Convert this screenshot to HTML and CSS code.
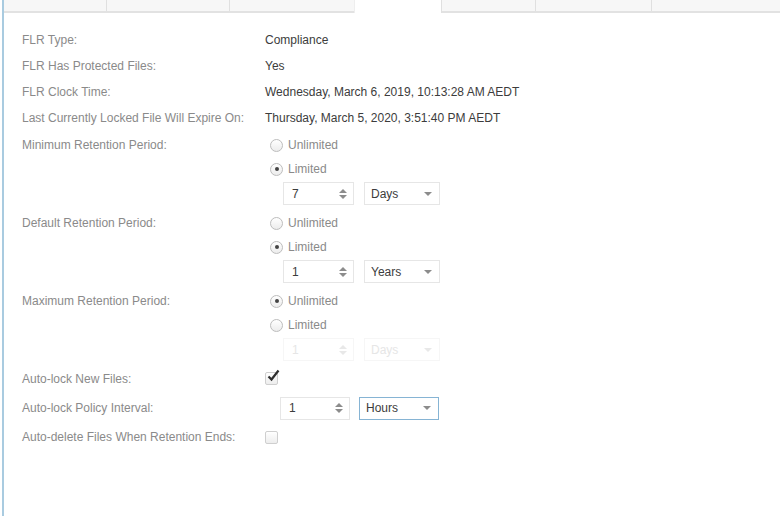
FILE: index.html
```html
<!DOCTYPE html>
<html lang="en">
<head>
  <meta charset="UTF-8" />
  <title>File Level Retention</title>
  <link rel="stylesheet" href="styles.css">
</head>
<body>
  <div class="panel">
    <div class="tabs">
      <div class="tab"></div>
      <div class="tab"></div>
      <div class="tab"></div>
      <div class="tab active"></div>
      <div class="tab"></div>
      <div class="tab"></div>
      <div class="tab last"></div>
    </div>

    <div class="content">
      <div class="row info">
        <div class="label">FLR Type:</div>
        <div class="value">Compliance</div>
      </div>
      <div class="row info">
        <div class="label">FLR Has Protected Files:</div>
        <div class="value">Yes</div>
      </div>
      <div class="row info">
        <div class="label">FLR Clock Time:</div>
        <div class="value">Wednesday, March 6, 2019, 10:13:28 AM AEDT</div>
      </div>
      <div class="row info">
        <div class="label">Last Currently Locked File Will Expire On:</div>
        <div class="value">Thursday, March 5, 2020, 3:51:40 PM AEDT</div>
      </div>

      <div class="row group first">
        <div class="label">Minimum Retention Period:</div>
        <div class="controls">
          <div class="radio-line"><span class="radio"></span>Unlimited</div>
          <div class="radio-line"><span class="radio on"></span>Limited</div>
          <div class="period">
            <div class="spinner"><span>7</span><span class="arrows"><i class="up"></i><i class="down"></i></span></div>
            <div class="select"><span>Days</span><i class="caret"></i></div>
          </div>
        </div>
      </div>

      <div class="row group">
        <div class="label">Default Retention Period:</div>
        <div class="controls">
          <div class="radio-line"><span class="radio"></span>Unlimited</div>
          <div class="radio-line"><span class="radio on"></span>Limited</div>
          <div class="period">
            <div class="spinner"><span>1</span><span class="arrows"><i class="up"></i><i class="down"></i></span></div>
            <div class="select"><span>Years</span><i class="caret"></i></div>
          </div>
        </div>
      </div>

      <div class="row group">
        <div class="label">Maximum Retention Period:</div>
        <div class="controls">
          <div class="radio-line"><span class="radio on"></span>Unlimited</div>
          <div class="radio-line"><span class="radio"></span>Limited</div>
          <div class="period disabled">
            <div class="spinner"><span>1</span><span class="arrows"><i class="up"></i><i class="down"></i></span></div>
            <div class="select"><span>Days</span><i class="caret"></i></div>
          </div>
        </div>
      </div>

      <div class="row check-row">
        <div class="label">Auto-lock New Files:</div>
        <div class="check on">
          <svg width="15" height="14" viewBox="0 0 15 14"><path d="M2.5 7.5 L5.5 10.5 L12.5 1.5" fill="none" stroke="#2f2f2f" stroke-width="2.2"/></svg>
        </div>
      </div>
      <div class="row interval">
        <div class="label">Auto-lock Policy Interval:</div>
        <div class="period">
          <div class="spinner"><span>1</span><span class="arrows"><i class="up"></i><i class="down"></i></span></div>
          <div class="select focus"><span>Hours</span><i class="caret"></i></div>
        </div>
      </div>
      <div class="row check-row">
        <div class="label">Auto-delete Files When Retention Ends:</div>
        <div class="check"></div>
      </div>
    </div>
  </div>
</body>
</html>
```

FILE: styles.css
```css
html, body {
  margin: 0;
  height: 100%;
}
body {
  font-family: 'Liberation Sans', Arial, sans-serif;
  font-size: 12px;
  background: #fff;
}
.panel {
  height: 100%;
  border-left: 2px solid #fff;
  box-shadow: inset 2px 0 0 #a9cbe0;
  padding-left: 2px;
}
.tabs {
  display: flex;
  height: 11px;
  border-bottom: 2px solid #e2e2e2;
  background: #f7f7f7;
}
.tab {
  border-right: 1px solid #e0e0e0;
}
.tab:nth-child(1) { width: 102px; }
.tab:nth-child(2) { width: 122px; }
.tab:nth-child(3) { width: 124px; }
.tab.active {
  width: 86px;
  background: #fff;
  height: 13px;
  border-left: 1px solid #eee;
  margin-left: -1px;
}
.tab:nth-child(5) { width: 93px; }
.tab:nth-child(6) { width: 115px; }
.tab.last { flex: 1; border-right: none; }

.content {
  padding: 14px 0 0 18px;
}
.row {
  display: flex;
}
.label {
  width: 243px;
  flex-shrink: 0;
  color: #8a8a8a;
  line-height: 26px;
}
.value {
  color: #3c3c3c;
  line-height: 26px;
}
.info {
  height: 26px;
}

.group {
  margin-bottom: 5px;
}
.group.first {
  margin-top: 2px;
}
.group .label {
  line-height: 24px;
}
.controls {
  display: flex;
  flex-direction: column;
}
.radio-line {
  display: flex;
  align-items: center;
  height: 24px;
  color: #8a8a8a;
  margin-left: 5px;
}
.radio {
  width: 11px;
  height: 11px;
  border: 1px solid #bdbdbd;
  border-radius: 50%;
  background: linear-gradient(#fff, #ececec);
  margin-right: 5px;
  position: relative;
}
.radio.on::after {
  content: '';
  position: absolute;
  left: 3.5px;
  top: 3.5px;
  width: 4px;
  height: 4px;
  border-radius: 50%;
  background: #444;
}

.period {
  display: flex;
  gap: 10px;
  height: 25px;
  align-items: center;
  margin-left: 18px;
}
.spinner, .select {
  height: 21px;
  border: 1px solid #e6e6e6;
  background: #fff;
  display: flex;
  align-items: center;
  justify-content: space-between;
  box-sizing: content-box;
  color: #3c3c3c;
}
.spinner {
  width: 55px;
  padding: 0 6px 0 8px;
}
.select {
  width: 61px;
  padding: 0 7px 0 6px;
}
.select.focus {
  border-color: #86b4d4;
  width: 65px;
  margin-left: -1px;
}
.arrows {
  display: flex;
  flex-direction: column;
  gap: 2px;
}
.arrows i {
  width: 0;
  height: 0;
  border-left: 4px solid transparent;
  border-right: 4px solid transparent;
}
.arrows .up { border-bottom: 4px solid #8c8c8c; }
.arrows .down { border-top: 4px solid #8c8c8c; }
.caret {
  width: 0;
  height: 0;
  border-left: 4px solid transparent;
  border-right: 4px solid transparent;
  border-top: 4px solid #8c8c8c;
}
.period.disabled .spinner,
.period.disabled .select {
  border-color: #f6f6f6;
  color: #e6e6e6;
}
.period.disabled .arrows .up { border-bottom-color: #e8e8e8; }
.period.disabled .arrows .down { border-top-color: #e8e8e8; }
.period.disabled .caret { border-top-color: #e8e8e8; }

.check-row {
  height: 24px;
  align-items: center;
}
.check-row .label {
  line-height: 24px;
}
.check {
  width: 11px;
  height: 11px;
  border: 1px solid #cfcfcf;
  border-radius: 2px;
  background: linear-gradient(#fff, #ededed);
  position: relative;
}
.check.on {
  margin-top: -2px;
}
.check svg {
  position: absolute;
  left: 0;
  top: -4px;
}
.interval {
  height: 26px;
  margin: 4px 0;
  align-items: center;
}
.interval .period {
  margin-left: 15px;
}
.interval .spinner {
  width: 54px;
}
```
